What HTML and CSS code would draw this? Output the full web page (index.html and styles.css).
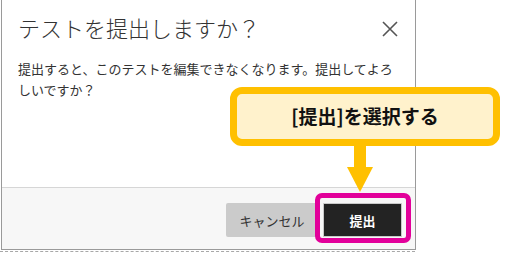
FILE: index.html
```html
<!DOCTYPE html>
<html lang="ja">
<head>
<meta charset="utf-8">
<link rel="stylesheet" href="styles.css">
</head>
<body>
<div class="stage">
  <div class="dialog">
    <div class="dlg-header">
      <h1 class="dlg-title">テストを提出しますか？</h1>
      <button class="dlg-close" aria-label="閉じる">
        <svg width="16" height="16" viewBox="0 0 16 16"><path d="M1 1 L15 15 M15 1 L1 15" stroke="#555" stroke-width="1.6" fill="none"/></svg>
      </button>
    </div>
    <div class="dlg-body">提出すると、このテストを編集できなくなります。提出してよろしいですか？</div>
    <div class="dlg-footer">
      <button class="btn btn-cancel">キャンセル</button>
      <button class="btn btn-submit">提出</button>
    </div>
  </div>
  <div class="page-edge"></div>

  <div class="callout">[提出]を選択する</div>
  <svg class="arrow" width="28" height="47" viewBox="0 0 28 47">
    <rect x="8" y="0" width="12" height="22" fill="#ffc000"/>
    <polygon points="1,21 27,21 14,46" fill="#ffc000"/>
  </svg>
  <div class="highlight"></div>
</div>
</body>
</html>
```

FILE: styles.css
```css
html, body {
  margin: 0;
  padding: 0;
  background: #fff;
}
body {
  font-family: "Noto Sans CJK JP", "Noto Sans", sans-serif;
  color: #333;
}
.stage {
  position: relative;
  width: 508px;
  height: 253px;
  overflow: hidden;
}
.dialog {
  margin-left: 1px;
  width: 413px;
  height: 249px;
  border: 1px solid #9a9a9a;
  border-top: none;
  display: flex;
  flex-direction: column;
  background: #fff;
}
.dlg-header {
  display: flex;
  align-items: center;
  justify-content: space-between;
  height: 56px;
  padding: 0 17px 0 16px;
}
.dlg-title {
  margin: 0;
  font-size: 22px;
  font-weight: 300;
  line-height: 30px;
  color: #333;
  margin-top: -2px;
}
.dlg-close {
  border: none;
  background: none;
  padding: 0;
  width: 16px;
  height: 16px;
  margin-top: 2px;
  display: flex;
}
.dlg-body {
  padding: 2px 16px 0 16px;
  font-size: 13px;
  line-height: 21px;
  color: #333;
  flex: 1;
}
.dlg-footer {
  height: 62px;
  border-top: 1px solid #d6d6d6;
  background: #f7f7f7;
  display: flex;
  justify-content: flex-end;
  align-items: flex-start;
  gap: 5px;
  padding: 15px 13px 0 0;
  box-sizing: border-box;
}
.btn {
  font-family: "Noto Sans CJK JP", "Noto Sans", sans-serif;
  font-size: 13px;
  height: 34px;
  border-radius: 2px;
  padding: 0;
  cursor: pointer;
}
.btn-cancel {
  width: 92px;
  background: #cbcbcb;
  border: none;
  color: #333;
}
.btn-submit {
  width: 79px;
  background: #232323;
  color: #fff;
  font-weight: bold;
  border: 1px solid #c9c9c9;
  border-radius: 1px;
}
.page-edge {
  margin-top: 1px;
  width: 415px;
  border-top: 1px dashed #a8a8a8;
}
.callout {
  position: absolute;
  left: 230px;
  top: 87px;
  width: 270px;
  height: 59px;
  box-sizing: border-box;
  border: 7px solid #ffc000;
  border-radius: 12px;
  background: #fff2cc;
  display: flex;
  align-items: center;
  justify-content: center;
  font-size: 19px;
  font-weight: bold;
  color: #111;
  padding-bottom: 2px;
}
.arrow {
  position: absolute;
  left: 346px;
  top: 146px;
}
.highlight {
  position: absolute;
  left: 315px;
  top: 193px;
  width: 96px;
  height: 50px;
  box-sizing: border-box;
  border: 5px solid #e2009a;
  border-radius: 7px;
}
```
